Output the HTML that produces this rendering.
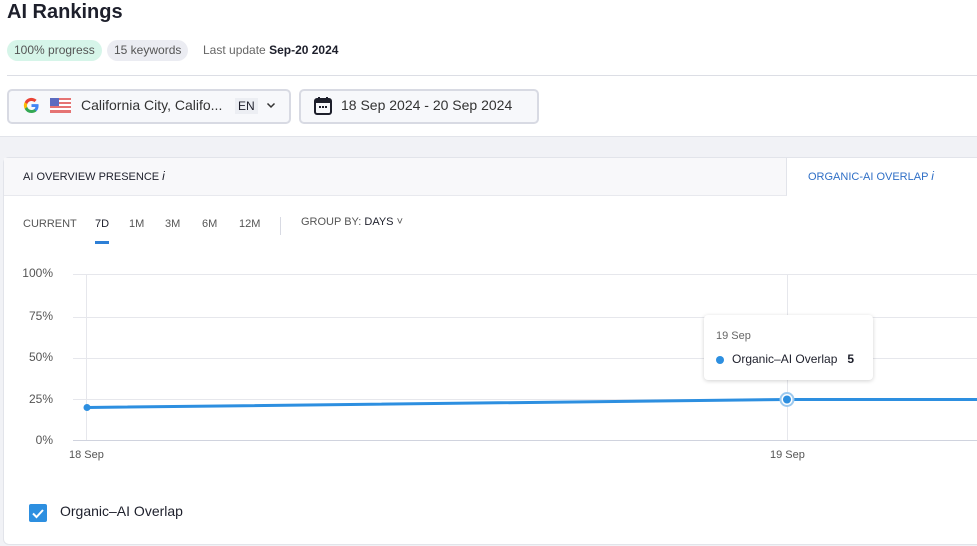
<!DOCTYPE html>
<html><head><meta charset="utf-8"><style>
*{margin:0;padding:0;box-sizing:border-box}
body{width:977px;height:546px;overflow:hidden;background:#f1f2f6;font-family:"Liberation Sans",sans-serif;color:#1d1f2b;position:relative}
.a{position:absolute;white-space:nowrap}
.top{position:absolute;left:0;top:0;width:977px;height:137px;background:#fff;border-bottom:1px solid #e2e4ea}
.pill{position:absolute;top:40px;height:21px;border-radius:11px;font-size:12px;line-height:21px;padding:0 7px;color:#555}
.box{position:absolute;top:89px;height:35px;border:2px solid #d8dae3;border-radius:5px;background:#f7f8fb}
.card{position:absolute;left:3px;top:157px;width:990px;height:388px;background:#fff;border-radius:6px;border:1px solid #e2e4ea}
.gl{position:absolute;left:73px;width:904px;height:1px;background:#e6e7ec}
.yl{position:absolute;left:0;width:53px;text-align:right;font-size:12px;color:#555}
.per{position:absolute;top:218px;font-size:11px;color:#555}
</style></head><body>
<div class="top"></div>
<div class="a" style="left:7px;top:1px;font-size:20px;font-weight:bold;color:#1d1f2b">AI Rankings</div>
<div class="pill" style="left:7px;background:#d6f5e9">100% progress</div>
<div class="pill" style="left:107px;background:#ebecf2">15 keywords</div>
<div class="a" style="left:203px;top:43px;font-size:12px;color:#666">Last update <b style="color:#1d1f2b">Sep-20 2024</b></div>
<div class="a" style="left:7px;top:75px;width:970px;height:1px;background:#dcdee5"></div>
<div class="box" style="left:7px;width:284px"></div>
<svg class="a" style="left:23px;top:97px" width="17" height="17" viewBox="0 0 18 18"><path d="M16.5 9.2c0-.6-.05-1.1-.15-1.6H9v3h4.2a3.6 3.6 0 0 1-1.6 2.4v2h2.6c1.5-1.4 2.3-3.4 2.3-5.8z" fill="#4285f4"/><path d="M9 17c2.2 0 4-.7 5.3-2l-2.6-2c-.7.5-1.6.8-2.7.8-2.1 0-3.9-1.4-4.5-3.3H1.8v2.1A8 8 0 0 0 9 17z" fill="#34a853"/><path d="M4.5 10.5a4.8 4.8 0 0 1 0-3V5.4H1.8a8 8 0 0 0 0 7.2z" fill="#fbbc05"/><path d="M9 4.2c1.2 0 2.2.4 3.1 1.2l2.3-2.3A8 8 0 0 0 1.8 5.4l2.7 2.1C5.1 5.6 6.9 4.2 9 4.2z" fill="#ea4335"/></svg>
<svg class="a" style="left:50px;top:98px" width="21" height="15"><rect width="21" height="15" fill="#e57373"/><rect y="2" width="21" height="2" fill="#fff"/><rect y="6" width="21" height="2" fill="#fff"/><rect y="10" width="21" height="2" fill="#fff"/><rect width="9" height="8" fill="#5c6bc0"/></svg>
<div class="a" style="left:81px;top:97px;font-size:14px;color:#333">California City, Califo...</div>
<div class="a" style="left:235px;top:98px;font-size:12px;background:#eceef3;padding:0 3px;line-height:16px">EN</div>
<svg class="a" style="left:266px;top:102px" width="10" height="7"><path d="M1.5 1.5l3.5 3.5 3.5-3.5" stroke="#333" stroke-width="1.5" fill="none"/></svg>
<div class="box" style="left:299px;width:240px"></div>
<svg class="a" style="left:313px;top:96px" width="20" height="20" viewBox="0 0 20 20"><rect x="2" y="3" width="16" height="15" rx="2" fill="none" stroke="#1d1f2b" stroke-width="2"/><rect x="2" y="3" width="16" height="4" fill="#1d1f2b"/><rect x="5" y="1" width="2" height="4" fill="#1d1f2b"/><rect x="13" y="1" width="2" height="4" fill="#1d1f2b"/><rect x="6" y="10" width="2" height="2" fill="#1d1f2b"/><rect x="9" y="10" width="2" height="2" fill="#1d1f2b"/><rect x="12" y="10" width="2" height="2" fill="#1d1f2b"/></svg>
<div class="a" style="left:341px;top:97px;font-size:14px;color:#333">18 Sep 2024 - 20 Sep 2024</div>

<div class="card"></div>
<div class="a" style="left:4px;top:158px;width:783px;height:38px;background:#f8f8fa;border-bottom:1px solid #e8e9ee;border-right:1px solid #e2e4ea"></div>
<div class="a" style="left:23px;top:169px;font-size:11px;color:#1d1f2b">AI OVERVIEW PRESENCE <i style="font-size:12px">i</i></div>
<div class="a" style="left:808px;top:169px;font-size:11px;color:#2f6fc6">ORGANIC-AI OVERLAP <i style="font-size:12px">i</i></div>

<div class="per" style="left:23px">CURRENT</div>
<div class="per" style="left:95px;color:#1d1f2b">7D</div>
<div class="a" style="left:95px;top:241px;width:14px;height:3px;background:#2d7fd6"></div>
<div class="per" style="left:129px">1M</div>
<div class="per" style="left:165px">3M</div>
<div class="per" style="left:202px">6M</div>
<div class="per" style="left:239px">12M</div>
<div class="a" style="left:280px;top:217px;width:1px;height:18px;background:#d8dae3"></div>
<div class="a" style="left:301px;top:216px;font-size:11px;color:#555">GROUP BY: <span style="color:#1d1f2b">DAYS</span> ˅</div>

<div class="gl" style="top:274px"></div>
<div class="gl" style="top:317px"></div>
<div class="gl" style="top:358px"></div>
<div class="gl" style="top:399px"></div>
<div class="gl" style="top:440px;background:#d0d3de"></div>
<div class="a" style="left:86px;top:275px;width:1px;height:165px;background:#e6e7ec"></div>
<div class="a" style="left:787px;top:275px;width:1px;height:165px;background:#e6e7ec"></div>
<div class="yl" style="top:266px">100%</div>
<div class="yl" style="top:309px">75%</div>
<div class="yl" style="top:350px">50%</div>
<div class="yl" style="top:392px">25%</div>
<div class="yl" style="top:433px">0%</div>
<div class="a" style="left:69px;top:449px;font-size:11px;color:#555">18 Sep</div>
<div class="a" style="left:770px;top:449px;font-size:11px;color:#555">19 Sep</div>
<svg class="a" style="left:0;top:0" width="977" height="546"><path d="M87 407.5L788 399.5L977 399.5" stroke="#2d8fe0" stroke-width="3" fill="none"/><circle cx="87" cy="407.5" r="3.5" fill="#2d8fe0"/><circle cx="787" cy="399.5" r="6.5" fill="#fff" stroke="#9cc9ef" stroke-width="2"/><circle cx="787" cy="399.5" r="4" fill="#2d8fe0"/></svg>

<div class="a" style="left:704px;top:315px;width:169px;height:65px;background:#fff;border-radius:4px;box-shadow:0 1px 4px rgba(0,0,0,.18)"></div>
<div class="a" style="left:716px;top:330px;font-size:11px;color:#666">19 Sep</div>
<div class="a" style="left:716px;top:356px;width:8px;height:8px;border-radius:50%;background:#2d8fe0"></div>
<div class="a" style="left:732px;top:352px;font-size:12px;color:#1d1f2b">Organic–AI Overlap&nbsp;&nbsp;&nbsp;<b>5</b></div>

<div class="a" style="left:29px;top:504px;width:18px;height:18px;background:#2d8fe0;border-radius:2px"></div>
<svg class="a" style="left:29px;top:504px" width="18" height="18"><path d="M4 9.5l3.5 3.5 6.5-7" stroke="#fff" stroke-width="2" fill="none"/></svg>
<div class="a" style="left:60px;top:503px;font-size:14px;color:#1d1f2b">Organic–AI Overlap</div>
</body></html>
